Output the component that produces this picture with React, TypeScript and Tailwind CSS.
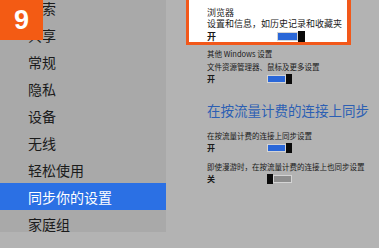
import React from "react";

const font = { fontFamily: '"Noto Sans CJK SC", "Noto Sans", sans-serif' };

function Toggle({ on, big }: { on: boolean; big?: boolean }) {
  const trackW = big ? "w-[21px]" : "w-[19px]";
  const trackH = big ? "h-[9px]" : "h-[8px]";
  const thumbW = big ? "w-[7px]" : "w-[6px]";
  const thumbH = big ? "h-[11px]" : "h-[10px]";
  const track = (
    <div
      className={`${trackW} ${trackH} border border-[#d4d4d4] ${
        on ? "bg-[#2a67d8]" : "bg-[#8e8e8e]"
      }`}
    />
  );
  const thumb = <div className={`${thumbW} ${thumbH} bg-[#0a0a0a]`} />;
  return (
    <div className="flex items-center">
      {on ? (
        <>
          {track}
          {thumb}
        </>
      ) : (
        <>
          {thumb}
          {track}
        </>
      )}
    </div>
  );
}

const items = ["搜索", "共享", "常规", "隐私", "设备", "无线", "轻松使用", "同步你的设置", "家庭组"];

export default function App() {
  return (
    <div className="w-[379px] h-[248px] bg-[#b3b3b3] overflow-hidden flex" style={font}>
      <div className="relative w-[166px] h-[232px] bg-[#a9a9a9] overflow-hidden shrink-0">
        <div className="mt-[-6px] flex flex-col">
          {items.map((t, i) => (
            <div
              key={t}
              className={`h-[27px] flex items-center pl-[28px] text-[14px] leading-none ${
                i === 7 ? "bg-[#2b70e4] text-white" : "text-[#1b1b1b]"
              }`}
            >
              {t}
            </div>
          ))}
        </div>
        <div className="absolute top-0 left-0 w-[43px] h-[40px] bg-[#f35b14] flex items-center justify-center">
          <span
            className="text-white text-[27px] font-bold leading-none"
            style={{ fontFamily: '"Liberation Sans", Arial, sans-serif' }}
          >
            9
          </span>
        </div>
      </div>

      <div className="flex flex-col pl-[20px] text-[#1a1a1a]">
        <div className="mt-[-4px] w-[165px] border-[3px] border-r-[4px] border-[#f2581a] bg-white pt-[8px] pl-[18px]">
          <div className="h-[11px] leading-[11px] text-[9px]">浏览器</div>
          <div className="h-[11px] leading-[11px] text-[9px] whitespace-nowrap">设置和信息，如历史记录和收藏夹</div>
          <div className="mt-[2px] h-[11px] flex items-center">
            <div className="w-[70px] text-[9px] font-bold leading-none">开</div>
            <Toggle on big />
          </div>
        </div>

        <div className="pl-[21px] mt-[2px]">
          <div className="h-[13px] leading-[13px] text-[7.5px] whitespace-nowrap">其他 Windows 设置</div>
          <div className="h-[13px] leading-[13px] text-[7.5px] whitespace-nowrap">文件资源管理器、鼠标及更多设置</div>
          <div className="h-[12px] flex items-center">
            <div className="w-[60px] text-[8px] font-bold leading-none">开</div>
            <Toggle on />
          </div>

          <div className="mt-[16px] h-[18px] leading-[18px] text-[13.5px] text-[#2c5fb3] whitespace-nowrap">
            在按流量计费的连接上同步
          </div>

          <div className="mt-[10px] h-[13px] leading-[13px] text-[7.5px] whitespace-nowrap">在按流量计费的连接上同步设置</div>
          <div className="h-[12px] flex items-center">
            <div className="w-[60px] text-[8px] font-bold leading-none">开</div>
            <Toggle on />
          </div>
          <div className="mt-[6px] h-[13px] leading-[13px] text-[7.5px] whitespace-nowrap">即使漫游时，在按流量计费的连接上也同步设置</div>
          <div className="h-[12px] flex items-center">
            <div className="w-[60px] text-[8px] font-bold leading-none">关</div>
            <Toggle on={false} />
          </div>
        </div>
      </div>
    </div>
  );
}
